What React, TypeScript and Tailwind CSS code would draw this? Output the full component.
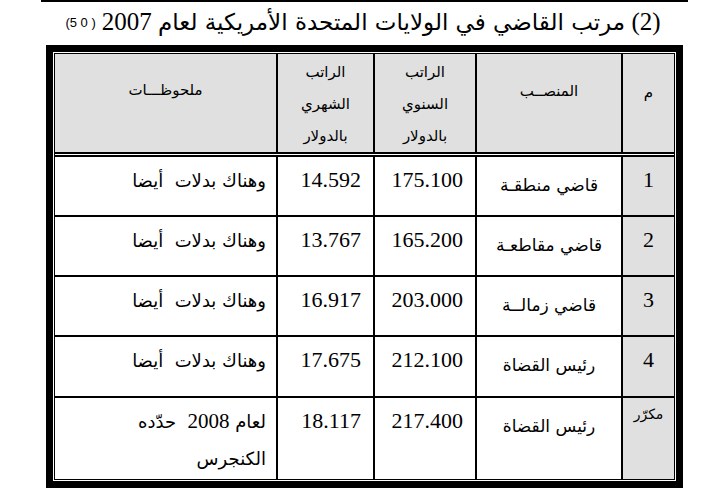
const serif = "font-['Liberation_Serif','DejaVu_Sans',serif]";
const arabic = "font-['DejaVu_Sans',sans-serif]";

type Row = {
  m: string;
  title: string;
  annual: string;
  monthly: string;
  h: string;
};

const rows: Row[] = [
  { m: '1', title: 'قاضي منطقـة', annual: '175.100', monthly: '14.592', h: 'h-[58px]' },
  { m: '2', title: 'قاضي مقاطعـة', annual: '165.200', monthly: '13.767', h: 'h-[58px]' },
  { m: '3', title: 'قاضي زمالــة', annual: '203.000', monthly: '16.917', h: 'h-[58px]' },
  { m: '4', title: 'رئيس القضاة', annual: '212.100', monthly: '17.675', h: 'h-[59px]' },
  { m: 'مكرّر', title: 'رئيس القضاة', annual: '217.400', monthly: '18.117', h: 'h-[81px]' },
];

const grid = 'grid grid-cols-[51px_144px_100px_95px_221px] gap-x-[2px]';

function Note({ last }: { last: boolean }) {
  if (!last) {
    return <div className="whitespace-pre">وهناك بدلات  أيضا</div>;
  }
  return (
    <>
      <div className="whitespace-pre">
        لعام <span className={`${serif} text-[21px]`}>2008</span>  حدّده
      </div>
      <div>الكنجرس</div>
    </>
  );
}

export default function App() {
  return (
    <div className="w-[726px] h-[488px] overflow-hidden bg-white text-black">
      <div className="ml-[41px] w-[647px] h-[2px] bg-black" />

      <div className="h-[43px] pt-[5px]">
        <h1 dir="rtl" className={`${serif} text-center text-[25px] leading-[30px] font-normal`}>
          (2) <span className={`${arabic} text-[23px]`}>مرتب القاضي في الولايات المتحدة الأمريكية لعام</span> 2007
          <sup dir="ltr" className="font-['Liberation_Sans',sans-serif] text-[13px] tracking-[2px] mr-[6px] relative -top-[3px]">
            (5 0 )
          </sup>
        </h1>
      </div>

      {/* Table with thick-thin outer frame */}
      <div className="ml-[46px] w-[637px] border-[7px] border-black bg-white p-[1px]">
        <div dir="rtl" className="border border-black bg-black flex flex-col">
          {/* Header */}
          <div className={`${grid} h-[97px]`}>
            <div className={`${arabic} bg-[#e0e0e0] text-center text-[15px] leading-[32px] pt-[22px]`}>م</div>
            <div className={`${arabic} bg-[#e0e0e0] text-center text-[15px] leading-[32px] pt-[21px]`}>المنصــب</div>
            <div className={`${arabic} bg-[#e0e0e0] text-center text-[15px] leading-[32px] pt-[2px]`}>
              <div>الراتب</div>
              <div>السنوي</div>
              <div>بالدولار</div>
            </div>
            <div className={`${arabic} bg-[#e0e0e0] text-center text-[15px] leading-[32px] pt-[2px]`}>
              <div>الراتب</div>
              <div>الشهري</div>
              <div>بالدولار</div>
            </div>
            <div className={`${arabic} bg-[#e0e0e0] text-center text-[15px] leading-[32px] pt-[20px]`}>ملحوظـــات</div>
          </div>

          {/* double rule under header */}
          <div className="mt-[3px] h-[1px] bg-white" />
          <div className="h-[2px]" />

          <div className="flex flex-col gap-y-[2px]">
            {rows.map((r, i) => (
              <div key={r.m + r.annual} className={`${grid} ${r.h}`}>
                {r.m.length > 1 ? (
                  <div className={`${arabic} bg-[#e0e0e0] text-center text-[14px] pt-[6px]`}>{r.m}</div>
                ) : (
                  <div className={`${serif} bg-[#e0e0e0] text-center text-[22px] leading-[26px] pt-[10px]`}>{r.m}</div>
                )}
                <div className={`${arabic} bg-white text-center text-[17px] leading-[26px] pt-[15px]`}>{r.title}</div>
                <div className={`${serif} bg-white text-[22px] leading-[26px] pt-[10px] pr-[12px]`}>{r.annual}</div>
                <div className={`${serif} bg-white text-[22px] leading-[26px] pt-[10px] pr-[12px]`}>{r.monthly}</div>
                <div className={`${arabic} bg-white text-[18px] leading-[37px] pt-[5px] pr-[10px]`}>
                  <Note last={i === rows.length - 1} />
                </div>
              </div>
            ))}
          </div>
        </div>
      </div>
    </div>
  );
}
